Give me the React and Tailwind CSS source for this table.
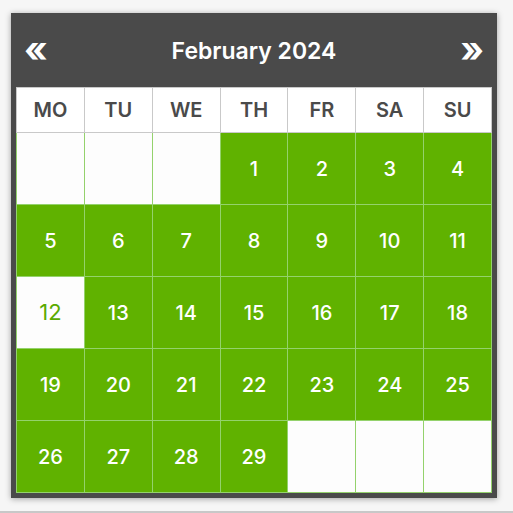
const DAYS = ["MO", "TU", "WE", "TH", "FR", "SA", "SU"];

// Feb 2024 starts on a Thursday
const cells = [
  null, null, null,
  ...Array.from({ length: 29 }, (_, i) => i + 1),
  null, null, null,
];

const TODAY = 12;

function DayCell({ day }) {
  if (day === null) return <div className="bg-[#fdfdfd] h-[71px]" />;
  if (day === TODAY) {
    return (
      <div className="bg-[#fdfdfd] h-[71px] flex items-center justify-center text-[22px] text-[#5aaa00]">
        {day}
      </div>
    );
  }
  return (
    <div className="bg-[#60b200] h-[71px] flex items-center justify-center text-[20px] font-medium text-white">
      {day}
    </div>
  );
}

export default function App() {
  return (
    <div className="w-[513px] h-[513px] bg-[#f6f6f6] relative font-['Inter',sans-serif] overflow-hidden">
      <div className="pl-[11px] pt-[13px]">
        <div className="w-[486px] bg-[#4a4a4a] shadow-[0_1px_6px_rgba(0,0,0,0.35)] px-[5px] pb-[5px]">
          <div className="h-[74px] flex items-center justify-between px-[8px] text-white">
            <span className="text-[36px] font-bold leading-none -mt-[2px]">«</span>
            <span className="text-[23px] font-semibold mt-[2px]">February 2024</span>
            <span className="text-[36px] font-bold leading-none -mt-[2px]">»</span>
          </div>
          <div className="grid grid-cols-7 gap-px p-px bg-[#c9c9c9]">
            {DAYS.map((d) => (
              <div
                key={d}
                className="bg-white h-[44px] flex items-center justify-center text-[20px] font-semibold text-[#4a4a4a]"
              >
                {d}
              </div>
            ))}
          </div>
          <div className="grid grid-cols-7 gap-px px-px pb-px bg-[#94d26c]">
            {cells.map((d, i) => (
              <DayCell key={i} day={d} />
            ))}
          </div>
        </div>
      </div>
      <div className="absolute left-0 right-0 bottom-0 h-[2px] bg-[#c8c8c8]" />
    </div>
  );
}
